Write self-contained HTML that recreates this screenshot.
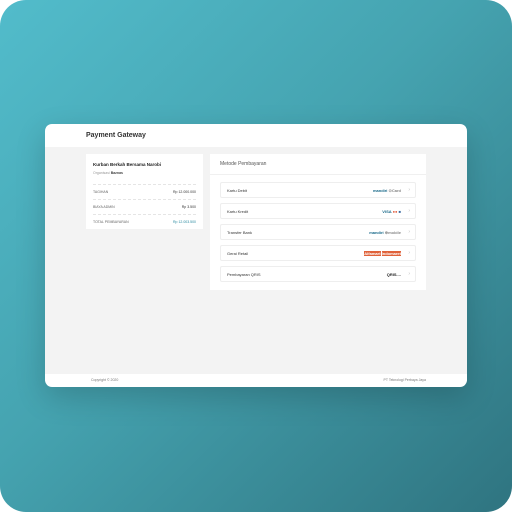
<!DOCTYPE html>
<html><head><style>
*{margin:0;padding:0;box-sizing:border-box}
body{width:512px;height:512px;background:#fff;font-family:"Liberation Sans",sans-serif;overflow:hidden;position:relative}
.bg{position:absolute;left:0;top:0;width:512px;height:512px;border-radius:26px;background:linear-gradient(135deg,#52bccb 0%,#45a3b0 45%,#2f7480 100%)}
.win{position:absolute;left:45px;top:124px;width:422px;height:263px;border-radius:7px;background:#fff;overflow:hidden;box-shadow:0 10px 30px rgba(0,0,0,.18)}
.hd{height:23px;font-size:7px;font-weight:bold;color:#333;padding:8px 0 0 41px}
.main{position:absolute;top:23px;left:0;right:0;height:227px;background:#f3f3f3}
.ft{position:absolute;bottom:0;left:0;right:0;height:13px;font-size:3.5px;color:#777;padding:4px 41px 0 46px;display:flex;justify-content:space-between}
.lc{position:absolute;left:41px;top:7px;width:117px;height:75px;background:#fff;padding:8px 7px}
.lc .t{font-size:4.5px;font-weight:bold;color:#222}
.lc .s{font-size:3.5px;color:#999;margin-top:4px;padding-bottom:9px;border-bottom:1px dashed #e5e5e5}
.lc .r{display:flex;justify-content:space-between;font-size:3.5px;color:#666;height:15px;padding-top:5px;border-bottom:1px dashed #e5e5e5}
.lc .r:last-child{border:none}
.rc{position:absolute;left:165px;top:7px;width:216px;height:136px;background:#fff}
.rc .h{height:21px;font-size:5px;color:#555;padding:7px 0 0 10px;border-bottom:1px solid #f0f0f0}
.row{position:absolute;left:10px;width:196px;height:16px;border:1px solid #eee;border-radius:2px;font-size:4px;color:#333;padding:5px 0 0 6px}
.lg{position:absolute;right:14px;top:5px;font-size:4px;font-weight:bold;color:#1a6a8a}
.ar{position:absolute;right:5px;top:4px;color:#bbb;font-size:5px}
</style></head><body>
<div class="bg"></div>
<div class="win">
<div class="hd">Payment Gateway</div>
<div class="main">
<div class="lc">
<div class="t">Kurban Berkah Bersama Narobi</div>
<div class="s">Organisasi <b style="color:#444">Baznas</b></div>
<div class="r"><span>TAGIHAN</span><span style="color:#333">Rp 12.000.000</span></div>
<div class="r"><span>BIAYA ADMIN</span><span style="color:#333">Rp 3.500</span></div>
<div class="r"><span>TOTAL PEMBAYARAN</span><span style="color:#2a8aa0">Rp 12.003.500</span></div>
</div>
<div class="rc">
<div class="h">Metode Pembayaran</div>
<div class="row" style="top:28px">Kartu Debit<span class="lg">mandiri <span style="color:#888">⊙Card</span></span><span class="ar">›</span></div>
<div class="row" style="top:49px">Kartu Kredit<span class="lg">VISA <span style="color:#e05a3a">●●</span> <span style="color:#3a6aa0">■</span></span><span class="ar">›</span></div>
<div class="row" style="top:70px">Transfer Bank<span class="lg">mandiri <span style="color:#888">⊕mobile</span></span><span class="ar">›</span></div>
<div class="row" style="top:91px">Gerai Retail<span class="lg"><span style="background:#e0623a;color:#fff">Alfamart</span> <span style="background:#e0623a;color:#fff">Indomaret</span></span><span class="ar">›</span></div>
<div class="row" style="top:112px">Pembayaran QRIS<span class="lg" style="color:#222">QRIS....</span><span class="ar">›</span></div>
</div>
</div>
<div class="ft"><span>Copyright © 2020</span><span>PT Teknologi Perbaya Jaya</span></div>
</div>
</body></html>
